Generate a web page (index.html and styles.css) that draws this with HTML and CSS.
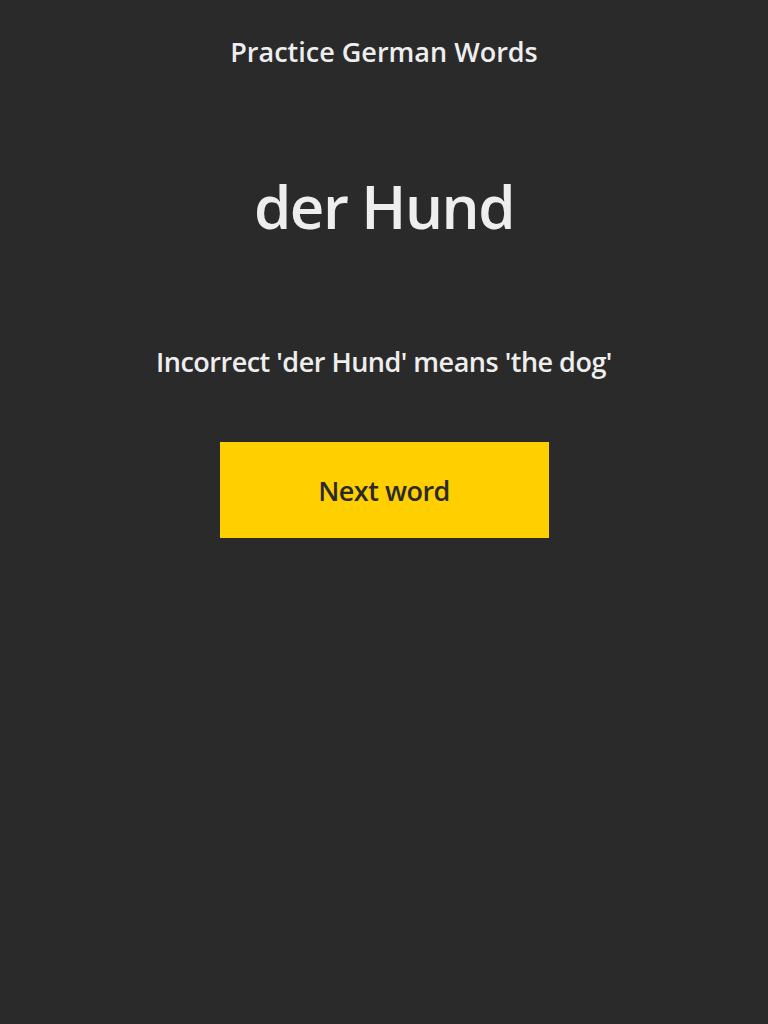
FILE: index.html
```html
<!DOCTYPE html>
<html lang="en">
<head>
<meta charset="utf-8">
<title>Practice German Words</title>
<link rel="stylesheet" href="styles.css">
</head>
<body>
<main class="app">
  <h1 class="title">Practice German Words</h1>
  <div class="word">der Hund</div>
  <p class="feedback">Incorrect 'der Hund' means 'the dog'</p>
  <button class="next">Next word</button>
</main>
</body>
</html>
```

FILE: styles.css
```css
html, body {
  margin: 0;
  padding: 0;
  background: #2a2a2a;
  height: 100%;
}
body {
  font-family: "Open Sans", "DejaVu Sans", sans-serif;
  color: #eeeeee;
}
.app {
  display: flex;
  flex-direction: column;
  align-items: center;
}
.title {
  margin: 0;
  padding-top: 33px;
  height: 38px;
  line-height: 38px;
  font-size: 27px;
  font-weight: 600;
  letter-spacing: 0;
}
.word {
  margin-top: 95px;
  height: 80px;
  line-height: 80px;
  font-size: 60px;
  font-weight: 600;
  letter-spacing: -1.5px;
}
.feedback {
  margin: 97px 0 0;
  height: 38px;
  line-height: 38px;
  font-size: 27px;
  font-weight: 600;
  letter-spacing: -0.5px;
}
.next {
  margin-top: 61px;
  width: 329px;
  height: 96px;
  border: none;
  border-radius: 0;
  background: #ffcf00;
  color: #2a2a2a;
  font-family: inherit;
  font-size: 27px;
  font-weight: 600;
  letter-spacing: -0.5px;
  padding: 0;
}
```
